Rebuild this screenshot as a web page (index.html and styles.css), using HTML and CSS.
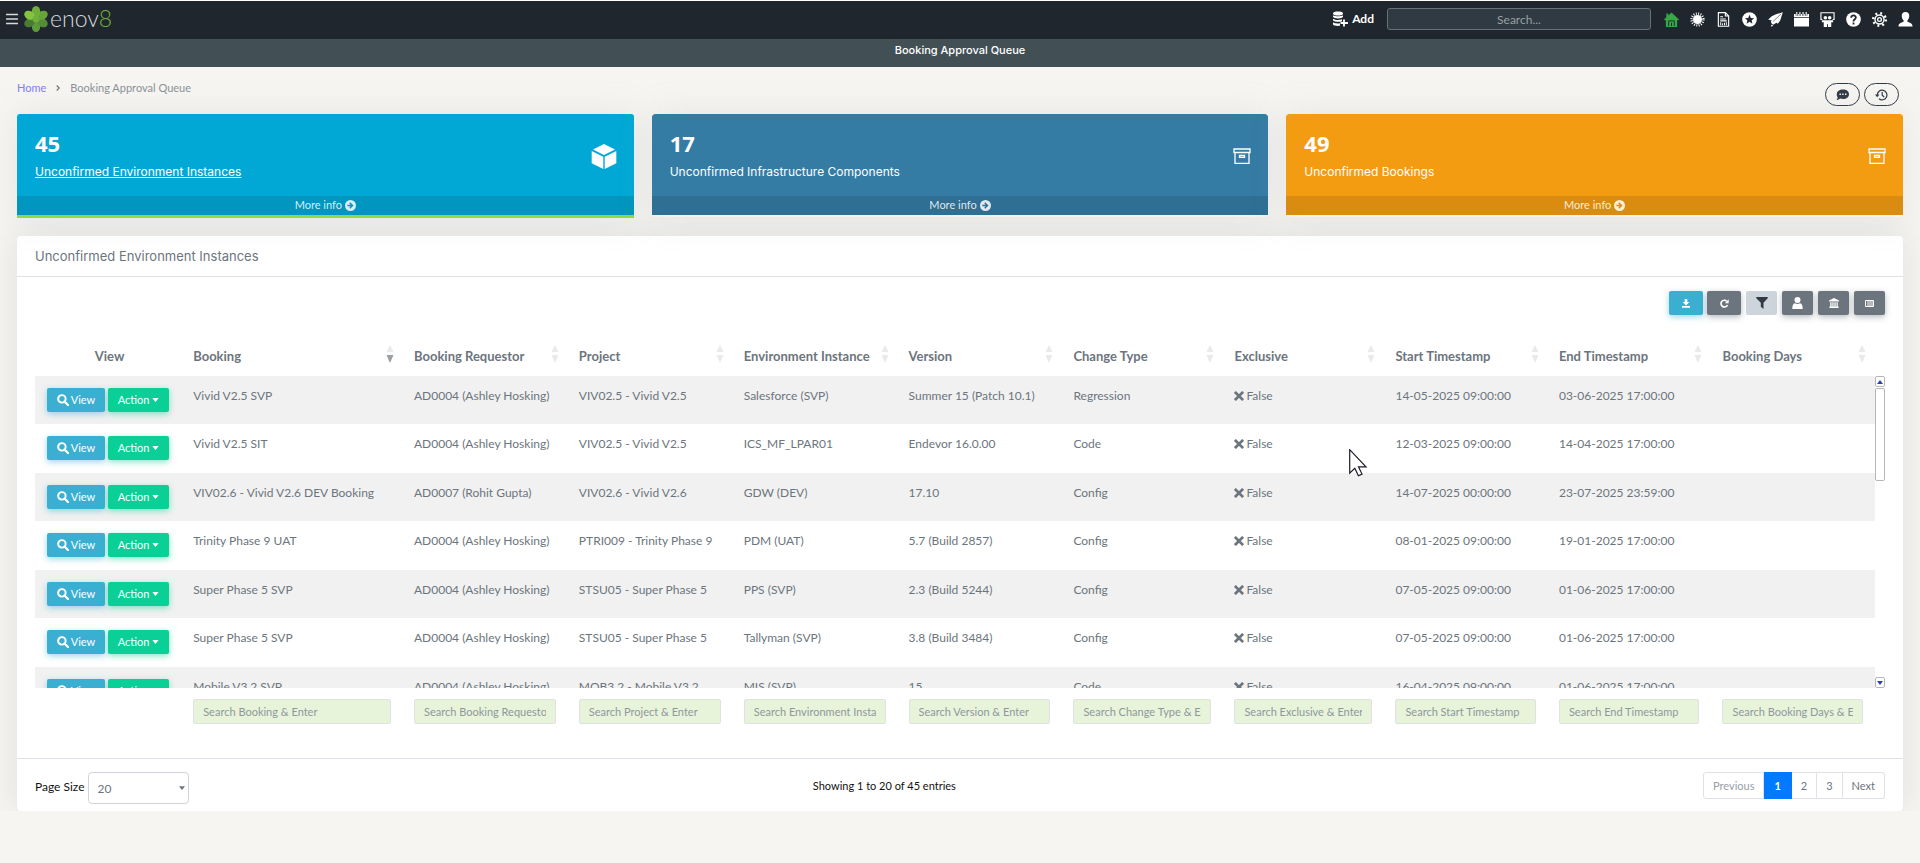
FILE: index.html
```html
<!DOCTYPE html>
<html lang="en">
<head>
  <meta charset="utf-8">
  <title>Booking Approval Queue</title>
  <link rel="stylesheet" href="styles.css">
</head>
<body>
  <svg class="sprite" aria-hidden="true">
    <symbol id="i-search" viewBox="0 0 16 16"><circle cx="6.5" cy="6.5" r="5" fill="none" stroke="currentColor" stroke-width="2.6"/><path d="M10 10l5 5" stroke="currentColor" stroke-width="3" stroke-linecap="round"/></symbol>
    <symbol id="i-times" viewBox="0 0 16 16"><path d="M3 3l10 10M13 3L3 13" stroke="currentColor" stroke-width="4.4" stroke-linecap="square"/></symbol>
    <symbol id="i-caret" viewBox="0 0 8 5"><path d="M0 0h8L4 5z" fill="currentColor"/></symbol>
    <symbol id="i-arrow" viewBox="0 0 16 16"><path fill="currentColor" fill-rule="evenodd" d="M8 0a8 8 0 100 16A8 8 0 008 0zM7.600 3.300L12.400 8l-4.800 4.700-1.400-1.400L8.300 9H3.500V7h4.800L6.200 4.700z"/></symbol>
    <symbol id="i-box" viewBox="0 0 18 16"><path fill="none" stroke="currentColor" stroke-width="1.300" d="M1 1h16v3.500H1zM2 4.500v10.800h14V4.500M6.500 7.500h5v1.800h-5z"/></symbol>
    <symbol id="i-sort" viewBox="0 0 8 18"><path d="M4 0l3.500 7h-7z"/><path d="M.5 10h7L4 18z"/></symbol>
    <symbol id="i-sort-desc" viewBox="0 0 8 18"><path d="M4 0l3.500 7h-7z"/><path d="M.5 10h7L4 18z" fill="#9aa0a6"/></symbol>
  </svg>

  <header class="topbar">
    <button class="menu-btn" aria-label="Menu"><svg width="12" height="12" viewBox="0 0 12 12"><path d="M0 1.500h12M0 6h12M0 10.500h12" stroke="#d5d9db" stroke-width="1.500"/></svg></button>
    <a class="logo" href="#" aria-label="enov8">
      <svg width="24" height="28" viewBox="-12 -14 24 28">
        <ellipse cx="0" cy="7.500" rx="4.200" ry="5.500" fill="#5c9a3c"/>
        <ellipse cx="0" cy="7.500" rx="4.200" ry="5.500" fill="#4b7a35" transform="rotate(60)"/>
        <ellipse cx="0" cy="7.500" rx="4.200" ry="5.500" fill="#558c38" transform="rotate(300)"/>
        <ellipse cx="0" cy="7.500" rx="4.200" ry="5.500" fill="#67a33b" transform="rotate(240)"/>
        <ellipse cx="0" cy="7.500" rx="4.200" ry="5.500" fill="#6fae3d" transform="rotate(180)"/>
        <ellipse cx="0" cy="7.500" rx="4.200" ry="5.500" fill="#85c440" transform="rotate(120)"/>
        <circle r="3.500" fill="#6fae3d"/>
      </svg>
      <span class="logo-text">enov<b>8</b></span>
    </a>
    <button class="add-btn">
      <svg width="16" height="16" viewBox="0 0 16 16"><path fill="#fff" d="M1 2.500C1 1 3 .5 6 .5s5 .5 5 2S9 4.500 6 4.500s-5-.5-5-2zM1 4.200c2 1.500 8 1.500 10 0v1.500C10 8 2 8 1 5.700zM1 7.700c2 1.500 7 1.500 9 .6v2C8 11.200 2 11 1 9.200zM1 11.200c1.500 1.200 4 1.400 7 1v2.600c-3 .4-6 0-7-1.300z"/><path stroke="#fff" stroke-width="1.800" d="M12 8.500v7M8.500 12H16"/></svg>
      Add
    </button>
    <input class="top-search" type="text" placeholder="Search..." aria-label="Search">
    <nav class="top-icons">
      <a href="#" aria-label="Home" class="home"><svg viewBox="0 0 16 16"><path fill="currentColor" d="M8 .5l8 7.500-1 1-1-.8V16H2V8.200L1 9 0 8l2.500-2.300V1.500h2v2.300z"/><path d="M5 15V9.500h6V15M8 15v-3.500" fill="none" stroke="#1f262d" stroke-width="1"/></svg></a>
      <a href="#" aria-label="Alerts"><svg viewBox="0 0 16 16"><circle cx="8" cy="8" r="4.800" fill="currentColor"/><circle cx="8" cy="8" r="6.300" fill="none" stroke="currentColor" stroke-width="2.600" stroke-dasharray="1 1.470"/></svg></a>
      <a href="#" aria-label="Reports"><svg viewBox="0 0 16 16"><path fill="none" stroke="currentColor" stroke-width="1.200" d="M2.500.7h7.500l3.500 3.500v11h-11zM10 .7v3.500h3.500M4.500 5h3M4.500 7.500h6M4.500 9.500h7"/><path fill="currentColor" d="M4.500 11h1v3h-1zM6.500 12h1v2h-1zM8.500 11.500h1V14h-1zM10.500 11h1v3h-1z"/></svg></a>
      <a href="#" aria-label="Favourites"><svg viewBox="0 0 16 16"><path fill="currentColor" fill-rule="evenodd" d="M8 .2a7.800 7.800 0 100 15.600A7.800 7.800 0 008 .2zM8 3l1.400 3.300 3.600.3-2.700 2.300.8 3.500L8 10.500l-3.100 1.900.8-3.500L3 6.600l3.600-.3z"/></svg></a>
      <a href="#" aria-label="Releases"><svg viewBox="0 0 16 16"><path fill="currentColor" d="M15.800.2L13 9l-2.500 3.500L9 11.500 5.500 13.500 4 12.500l-1-2 1-1.500L.2 8 4 4.500 8.500 2.500zM3 13.500L5.500 14l-1.500 2z"/><path d="M5.500 10L14 2" stroke="#1f262d" stroke-width=".6"/></svg></a>
      <a href="#" aria-label="Calendar"><svg viewBox="0 0 16 16"><path fill="currentColor" d="M0 2h16v3.500H0zM0 6.500h16V15.500H0z"/><path stroke="#1f262d" stroke-width="2.400" d="M3 1v3M6.300 1v3M9.700 1v3M13 1v3"/><path stroke="currentColor" stroke-width="1.200" d="M3 0v4M6.300 0v4M9.700 0v4M13 0v4"/></svg></a>
      <a href="#" aria-label="Teams"><svg viewBox="0 0 16 16"><path fill="none" stroke="currentColor" stroke-width="1.200" d="M2.500 8H1V.8h14V8h-1.500"/><g fill="currentColor"><circle cx="5.700" cy="6.200" r="1.900"/><circle cx="10.300" cy="6.200" r="1.900"/><path d="M2 8.700h12v2.300h-2V16H8.500v-3h-1v3H4v-5H2z"/></g></svg></a>
      <a href="#" aria-label="Help"><svg viewBox="0 0 16 16"><circle cx="8" cy="8" r="7.800" fill="currentColor"/><path fill="none" stroke="#1f262d" stroke-width="1.900" d="M5.500 6c0-3.200 5.200-3 5 .2C10.400 7.800 8 7.800 8 10M8 11.200v2"/></svg></a>
      <a href="#" aria-label="Settings"><svg viewBox="0 0 16 16"><circle cx="8" cy="8" r="6.700" fill="none" stroke="currentColor" stroke-width="2.600" stroke-dasharray="2 3.260"/><circle cx="8" cy="8" r="4.800" fill="none" stroke="currentColor" stroke-width="1.500"/><circle cx="8" cy="8" r="2" fill="none" stroke="currentColor" stroke-width="1.400"/></svg></a>
      <a href="#" aria-label="Profile"><svg viewBox="0 0 16 16"><path fill="currentColor" d="M8 0c2.800 0 4.200 2 4 4.500-.2 2-1 3.500-2 4.500v1.500c2.500 1 5.500 1.500 5.500 5H.5c0-3.500 3-4 5.500-5V9c-1-1-1.800-2.500-2-4.500C3.800 2 5.200 0 8 0z"/></svg></a>
    </nav>
  </header>
  <h1 class="page-title">Booking Approval Queue</h1>

  <main class="page">
    <div class="page-head">
      <nav class="breadcrumb">
        <a href="#">Home</a>
        <svg width="4" height="6" viewBox="0 0 4 6"><path d="M.7.500L3.200 3 .7 5.500" fill="none" stroke="#6c757d" stroke-width="1.200"/></svg>
        <span>Booking Approval Queue</span>
      </nav>
      <div class="head-actions">
        <button class="pill" aria-label="Comments"><svg width="13" height="12" viewBox="0 0 13 12"><path fill="#323a46" d="M7 .5c3.500 0 6 2 6 4.700S10.500 10 7 10c-1 0-2-.2-2.800-.5C3 10.500 1.500 11.200.5 11c.8-.8 1.200-1.700 1.200-2.600C1 7.500.8 6.500.8 5.200.8 2.500 3.500.5 7 .5z"/><path stroke="#fff" stroke-width="1.400" d="M3.500 5.200h1.400M6.200 5.200h1.400M9 5.200h1.400"/></svg></button>
        <button class="pill" aria-label="History"><svg width="13" height="12" viewBox="0 0 13 12"><path fill="none" stroke="#323a46" stroke-width="1.200" d="M2.300 6A4.800 4.800 0 114 9.700M7.200 3v3.200l2 1.800"/><path fill="#323a46" d="M0 5.500h4.500L2.200 8.200z"/></svg></button>
      </div>
    </div>

    <section class="tiles">
      <article class="tile tile-cyan">
        <div class="tile-body">
          <div><strong>45</strong><p>Unconfirmed Environment Instances</p></div>
          <svg width="26" height="25" viewBox="0 0 26 25"><path fill="#fff" d="M13 0l11 5.500-11 5.500L2 5.500zM.7 7l11.600 5.800V25L.7 19.200zM25.300 7v12.200L13.700 25V12.800z"/></svg>
        </div>
        <a class="tile-more" href="#">More info <svg width="11" height="11"><use href="#i-arrow"/></svg></a>
      </article>
      <article class="tile tile-blue">
        <div class="tile-body">
          <div><strong>17</strong><p>Unconfirmed Infrastructure Components</p></div>
          <svg width="18" height="16"><use href="#i-box"/></svg>
        </div>
        <a class="tile-more" href="#">More info <svg width="11" height="11"><use href="#i-arrow"/></svg></a>
      </article>
      <article class="tile tile-orange">
        <div class="tile-body">
          <div><strong>49</strong><p>Unconfirmed Bookings</p></div>
          <svg width="18" height="16"><use href="#i-box"/></svg>
        </div>
        <a class="tile-more" href="#">More info <svg width="11" height="11"><use href="#i-arrow"/></svg></a>
      </article>
    </section>

    <section class="panel">
      <h2 class="panel-title">Unconfirmed Environment Instances</h2>
      <div class="panel-body">
        <div class="toolbar">
          <div class="tool-pair">
            <button class="tool tool-info" aria-label="Download"><svg width="8" height="9" viewBox="0 0 8 9"><path fill="currentColor" d="M2.700 0h2.600v3h2L4 6.400.7 3h2zM0 7h8v1.700H0z"/></svg></button>
            <button class="tool" aria-label="Refresh"><svg width="9" height="9" viewBox="0 0 9 9"><path fill="none" stroke="currentColor" stroke-width="1.600" d="M7.500 6A3.400 3.400 0 116.800 2.200"/><path fill="currentColor" d="M8.700.2v4H4.900z"/></svg></button>
          </div>
          <button class="tool tool-light" aria-label="Filter"><svg width="12" height="12" viewBox="0 0 12 12"><path fill="currentColor" d="M.3 0h11.400v1.200L7.500 5.800V12L4.800 9.800v-4L.3 1.200z"/></svg></button>
          <button class="tool" aria-label="User"><svg width="11" height="12" viewBox="0 0 11 12"><circle cx="5.500" cy="3" r="3" fill="currentColor"/><path fill="currentColor" d="M.3 12c0-3.500.7-5.300 2.700-5.700 1.500 1 3.500 1 5 0 2 .4 2.700 2.200 2.700 5.700z"/></svg></button>
          <button class="tool" aria-label="Organisation"><svg width="10" height="10" viewBox="0 0 10 10"><path fill="currentColor" d="M5 0l5 2.500v1H0v-1zM1.200 4.200h1.400V8H1.200zM3.300 4.200h1.300V8H3.300zM5.400 4.200h1.300V8H5.400zM7.500 4.200h1.300V8H7.500zM.5 8.200h9V10h-9z"/></svg></button>
          <button class="tool" aria-label="Columns"><svg width="9" height="7" viewBox="0 0 9 7"><path fill="none" stroke="currentColor" d="M.5.500h8v6h-8zM3 0v7M5 0v7M7 0v7"/></svg></button>
        </div>

        <div class="grid-head">
          <table>
            <colgroup><col class="c-view"><col class="c-booking"><col class="c-text" span="4"><col class="c-flag" span="2"><col span="3"></colgroup>
            <thead>
              <tr>
                <th class="center">View</th>
                <th><div>Booking<svg><use href="#i-sort-desc"/></svg></div></th>
                <th><div>Booking Requestor<svg><use href="#i-sort"/></svg></div></th>
                <th><div>Project<svg><use href="#i-sort"/></svg></div></th>
                <th><div>Environment Instance<svg><use href="#i-sort"/></svg></div></th>
                <th><div>Version<svg><use href="#i-sort"/></svg></div></th>
                <th><div>Change Type<svg><use href="#i-sort"/></svg></div></th>
                <th><div>Exclusive<svg><use href="#i-sort"/></svg></div></th>
                <th><div>Start Timestamp<svg><use href="#i-sort"/></svg></div></th>
                <th><div>End Timestamp<svg><use href="#i-sort"/></svg></div></th>
                <th><div>Booking Days<svg><use href="#i-sort"/></svg></div></th>
              </tr>
            </thead>
          </table>
        </div>

        <div class="grid-body">
          <table>
            <colgroup><col class="c-view"><col class="c-booking"><col class="c-text" span="4"><col class="c-flag" span="2"><col span="3"></colgroup>
            <tbody>
              <tr>
                <td class="actions"><button class="btn btn-view"><svg><use href="#i-search"/></svg>View</button><button class="btn btn-action">Action<svg><use href="#i-caret"/></svg></button></td>
                <td>Vivid V2.5 SVP</td><td>AD0004 (Ashley Hosking)</td><td>VIV02.5 - Vivid V2.5</td><td>Salesforce (SVP)</td><td>Summer 15 (Patch 10.1)</td><td>Regression</td><td><svg><use href="#i-times"/></svg>False</td><td>14-05-2025 09:00:00</td><td>03-06-2025 17:00:00</td><td></td>
              </tr>
              <tr>
                <td class="actions"><button class="btn btn-view"><svg><use href="#i-search"/></svg>View</button><button class="btn btn-action">Action<svg><use href="#i-caret"/></svg></button></td>
                <td>Vivid V2.5 SIT</td><td>AD0004 (Ashley Hosking)</td><td>VIV02.5 - Vivid V2.5</td><td>ICS_MF_LPAR01</td><td>Endevor 16.0.00</td><td>Code</td><td><svg><use href="#i-times"/></svg>False</td><td>12-03-2025 09:00:00</td><td>14-04-2025 17:00:00</td><td></td>
              </tr>
              <tr>
                <td class="actions"><button class="btn btn-view"><svg><use href="#i-search"/></svg>View</button><button class="btn btn-action">Action<svg><use href="#i-caret"/></svg></button></td>
                <td>VIV02.6 - Vivid V2.6 DEV Booking</td><td>AD0007 (Rohit Gupta)</td><td>VIV02.6 - Vivid V2.6</td><td>GDW (DEV)</td><td>17.10</td><td>Config</td><td><svg><use href="#i-times"/></svg>False</td><td>14-07-2025 00:00:00</td><td>23-07-2025 23:59:00</td><td></td>
              </tr>
              <tr>
                <td class="actions"><button class="btn btn-view"><svg><use href="#i-search"/></svg>View</button><button class="btn btn-action">Action<svg><use href="#i-caret"/></svg></button></td>
                <td>Trinity Phase 9 UAT</td><td>AD0004 (Ashley Hosking)</td><td>PTRI009 - Trinity Phase 9</td><td>PDM (UAT)</td><td>5.7 (Build 2857)</td><td>Config</td><td><svg><use href="#i-times"/></svg>False</td><td>08-01-2025 09:00:00</td><td>19-01-2025 17:00:00</td><td></td>
              </tr>
              <tr>
                <td class="actions"><button class="btn btn-view"><svg><use href="#i-search"/></svg>View</button><button class="btn btn-action">Action<svg><use href="#i-caret"/></svg></button></td>
                <td>Super Phase 5 SVP</td><td>AD0004 (Ashley Hosking)</td><td>STSU05 - Super Phase 5</td><td>PPS (SVP)</td><td>2.3 (Build 5244)</td><td>Config</td><td><svg><use href="#i-times"/></svg>False</td><td>07-05-2025 09:00:00</td><td>01-06-2025 17:00:00</td><td></td>
              </tr>
              <tr>
                <td class="actions"><button class="btn btn-view"><svg><use href="#i-search"/></svg>View</button><button class="btn btn-action">Action<svg><use href="#i-caret"/></svg></button></td>
                <td>Super Phase 5 SVP</td><td>AD0004 (Ashley Hosking)</td><td>STSU05 - Super Phase 5</td><td>Tallyman (SVP)</td><td>3.8 (Build 3484)</td><td>Config</td><td><svg><use href="#i-times"/></svg>False</td><td>07-05-2025 09:00:00</td><td>01-06-2025 17:00:00</td><td></td>
              </tr>
              <tr>
                <td class="actions"><button class="btn btn-view"><svg><use href="#i-search"/></svg>View</button><button class="btn btn-action">Action<svg><use href="#i-caret"/></svg></button></td>
                <td>Mobile V3.2 SVP</td><td>AD0004 (Ashley Hosking)</td><td>MOB3.2 - Mobile V3.2</td><td>MIS (SVP)</td><td>15</td><td>Code</td><td><svg><use href="#i-times"/></svg>False</td><td>16-04-2025 09:00:00</td><td>01-06-2025 17:00:00</td><td></td>
              </tr>
            </tbody>
          </table>
          <div class="scrollbar">
            <span class="scroll-btn"><svg width="6" height="4" viewBox="0 0 6 4"><path d="M0 4l3-4 3 4z" fill="#2b3fa8"/></svg></span>
            <span class="scroll-thumb"></span>
            <span class="scroll-btn scroll-end"><svg width="6" height="4" viewBox="0 0 6 4"><path d="M0 0h6L3 4z" fill="#2b3fa8"/></svg></span>
          </div>
        </div>

        <div class="grid-foot">
          <table>
            <colgroup><col class="c-view"><col class="c-booking"><col class="c-text" span="4"><col class="c-flag" span="2"><col span="3"></colgroup>
            <tfoot>
              <tr>
                <td></td>
                <td><input type="text" placeholder="Search Booking &amp; Enter" aria-label="Search Booking"></td>
                <td><input type="text" placeholder="Search Booking Requestor &amp; Enter" aria-label="Search Booking Requestor"></td>
                <td><input type="text" placeholder="Search Project &amp; Enter" aria-label="Search Project"></td>
                <td><input type="text" placeholder="Search Environment Instance &amp; Enter" aria-label="Search Environment Instance"></td>
                <td><input type="text" placeholder="Search Version &amp; Enter" aria-label="Search Version"></td>
                <td><input type="text" placeholder="Search Change Type &amp; Enter" aria-label="Search Change Type"></td>
                <td><input type="text" placeholder="Search Exclusive &amp; Enter" aria-label="Search Exclusive"></td>
                <td><input type="text" placeholder="Search Start Timestamp" aria-label="Search Start Timestamp"></td>
                <td><input type="text" placeholder="Search End Timestamp" aria-label="Search End Timestamp"></td>
                <td><input type="text" placeholder="Search Booking Days &amp; Enter" aria-label="Search Booking Days"></td>
              </tr>
            </tfoot>
          </table>
        </div>
      </div>

      <footer class="panel-foot">
        <div class="page-size">
          <label for="page-size">Page Size</label>
          <select id="page-size"><option>20</option><option>50</option><option>100</option></select>
          <svg width="6" height="4"><use href="#i-caret"/></svg>
        </div>
        <p>Showing 1 to 20 of 45 entries</p>
        <div class="pager">
          <button class="muted">Previous</button><button class="active">1</button><button>2</button><button>3</button><button>Next</button>
        </div>
      </footer>
    </section>
  </main>

  <svg class="pointer" width="19" height="28" viewBox="0 0 19 28"><path d="M.7.700v23.500l5.100-4.900 3.600 7.500 3.600-1.700-3.500-7.300h7.500z" fill="#fff" stroke="#1b1b2b" stroke-width="1.200"/></svg>
</body>
</html>
```
FILE: styles.css
```css
* {
  box-sizing: border-box;
}
body {
  margin: 0;
  background: #f6f5f1;
  color: #6c757d;
  font-family: Lato, "Open Sans", sans-serif;
  font-size: 12px;
  line-height: 20px;
}
p, h1, h2 {
  margin: 0;
}
a {
  text-decoration: none;
}
button {
  font: inherit;
  border: 0;
  padding: 0;
  cursor: pointer;
}
input, select {
  font: inherit;
}
.sprite {
  display: none;
}

/* top bar */
.topbar {
  display: flex;
  align-items: center;
  height: 39px;
  padding: 0 7px 2px 6px;
  background: #1f262d;
  border-top: 1px solid #fff;
}
.menu-btn {
  display: flex;
  background: none;
}
.logo {
  display: flex;
  align-items: center;
  gap: 2px;
  margin: 0 auto 0 6px;
}
.logo-text {
  padding-bottom: 3px;
  color: #d5d9db;
  font-size: 23px;
  font-weight: 300;
}
.logo-text b {
  color: #6fae3d;
  font-weight: 300;
}
.add-btn {
  display: flex;
  align-items: center;
  gap: 4px;
  margin-right: 13px;
  background: none;
  color: #fff;
  font-weight: 700;
}
.top-search {
  width: 264px;
  height: 22px;
  margin-right: 13px;
  background: #2f3a42;
  border: 1px solid #65717a;
  border-radius: 3px;
  text-align: center;
}
.top-search::placeholder {
  color: #98a0a6;
}
.top-icons {
  display: flex;
  gap: 11px;
}
.top-icons a {
  color: #fff;
}
.top-icons .home {
  color: #36a845;
}
.top-icons svg {
  display: block;
  width: 15px;
  height: 15px;
}
.page-title {
  height: 28px;
  background: #424f55;
  color: #fff;
  font-family: Inter, sans-serif;
  font-size: 11px;
  font-weight: 500;
  line-height: 22px;
  text-align: center;
}

/* page */
.page {
  padding: 0 17px;
}
.page-head {
  display: flex;
  justify-content: space-between;
  height: 47px;
  padding: 11px 4px 8px 0;
}
.breadcrumb {
  display: flex;
  align-items: center;
  gap: 10px;
  height: 20px;
  font-size: 11px;
  color: #8b9299;
}
.breadcrumb a {
  color: #8080f5;
}
.head-actions {
  display: flex;
  gap: 4px;
  align-items: flex-end;
}
.pill {
  display: flex;
  align-items: center;
  justify-content: center;
  width: 35px;
  height: 23px;
  background: none;
  border: 1px solid #323a46;
  border-radius: 12px;
}

.tiles {
  display: grid;
  grid-template-columns: repeat(3, 1fr);
  gap: 18px;
  margin-bottom: 18px;
}
.tile {
  color: #fff;
  border-radius: 3px;
  border-bottom: 3px solid transparent;
  background-clip: padding-box;
  box-shadow: 0 0 35px rgba(154, 161, 171, 0.18);
}
.tile-cyan {
  background-color: #02a8d5;
  border-bottom-color: #94d643;
  border-radius: 3px 3px 0 0;
}
.tile-blue {
  background-color: #357ca5;
}
.tile-orange {
  background-color: #f39c12;
}
.tile-body {
  display: flex;
  align-items: center;
  justify-content: space-between;
  height: 82px;
  padding: 2px 17px 0 18px;
}
.tile-body strong {
  display: block;
  font-family: "Noto Sans", sans-serif;
  font-size: 22px;
  line-height: 32px;
}
.tile-body p {
  font-family: Inter, sans-serif;
  font-size: 12px;
  line-height: 26px;
}
.tile-cyan p {
  text-decoration: underline;
}
.tile-more {
  display: flex;
  align-items: center;
  justify-content: center;
  gap: 3px;
  height: 19px;
  padding-bottom: 1px;
  background: rgba(0, 0, 0, 0.1);
  color: rgba(255, 255, 255, 0.85);
  font-size: 11px;
}

/* panel */
.panel {
  background: #fff;
  border-radius: 4px;
  box-shadow: 0 0 35px rgba(154, 161, 171, 0.25);
}
.panel-title {
  padding: 10px 18px;
  border-bottom: 1px solid #dee2e6;
  font-family: Inter, sans-serif;
  font-size: 13px;
  font-weight: 400;
}
.panel-body {
  padding: 14px 18px 34px;
}
.toolbar {
  display: flex;
  justify-content: flex-end;
  gap: 5px;
  margin-bottom: 20px;
}
.tool-pair {
  display: flex;
  gap: 4px;
}
.tool {
  display: flex;
  align-items: center;
  justify-content: center;
  width: 31px;
  height: 24px;
  background: #6c757d;
  color: #fff;
  border-radius: 2px;
  box-shadow: 0 2px 6px rgba(108, 117, 125, 0.5);
}
.tool-pair .tool {
  width: 34px;
}
.tool-info {
  background: #3bafd1;
  box-shadow: 0 2px 6px rgba(59, 175, 209, 0.5);
}
.tool-light {
  background: #ced4dc;
  color: #323a46;
  box-shadow: none;
}

/* data grid: head, scrolling body and foot share the same columns */
table {
  width: 100%;
  table-layout: fixed;
  border-collapse: collapse;
}
.c-view {
  width: 8%;
}
.c-booking {
  width: 12%;
}
.c-text {
  width: 8.96%;
}
.c-flag {
  width: 8.75%;
}
th, td {
  padding: 0 12px 0 11px;
  text-align: left;
  white-space: nowrap;
}
.grid-head, .grid-foot {
  padding-right: 10px;
}
th {
  height: 41px;
  padding-right: 9px;
  font-size: 13px;
  font-weight: 700;
}
th.center {
  text-align: center;
}
th div {
  display: flex;
  align-items: center;
  justify-content: space-between;
}
th svg {
  width: 8px;
  height: 18px;
  margin-bottom: 4px;
  fill: #e9eaec;
}
.grid-body {
  display: flex;
  align-items: flex-start;
  height: 312px;
  overflow: hidden;
}
.grid-body table {
  flex: 1;
}
.grid-body td {
  height: 49px;
  padding-top: 10px;
  vertical-align: top;
}
.grid-body tr:nth-child(odd) td {
  height: 48px;
  background: #f1f1f1;
}
td svg {
  width: 10px;
  height: 10px;
  margin-right: 2px;
  vertical-align: -1px;
}
.grid-body .actions {
  padding: 12px 0 0 12px;
}
.btn {
  height: 24px;
  color: #fff;
  border-radius: 2px;
  font-size: 11px;
  line-height: 22px;
  vertical-align: top;
}
.btn-view {
  width: 58px;
  margin-right: 3px;
  background: #3bafd1;
  box-shadow: 0 2px 6px rgba(59, 175, 209, 0.5);
}
.btn-view svg {
  width: 12px;
  height: 12px;
  vertical-align: -2px;
}
.btn-action {
  width: 61px;
  background: #0acf97;
  box-shadow: 0 2px 6px rgba(10, 207, 151, 0.5);
}
.btn-action svg {
  width: 7px;
  height: 4px;
  margin: 0 0 0 3px;
  vertical-align: 2px;
}
.scrollbar {
  display: flex;
  flex-direction: column;
  flex-shrink: 0;
  gap: 1px;
  width: 10px;
  height: 100%;
}
.scroll-btn, .scroll-thumb {
  height: 11px;
  background: #fff;
  border: 1px solid #b4b6ba;
  border-radius: 2px;
}
.scroll-btn {
  display: flex;
  align-items: center;
  justify-content: center;
}
.scroll-thumb {
  height: 93px;
}
.scroll-end {
  margin-top: auto;
}
.grid-foot {
  padding-top: 11px;
}
.grid-foot input {
  display: block;
  width: 100%;
  height: 25px;
  padding: 0 9px;
  background: #e7f4da;
  border: 1px solid #dee2e6;
  border-radius: 2px;
  font-size: 11px;
}
.grid-foot input::placeholder {
  color: #8f979e;
}

/* panel footer */
.panel-foot {
  display: grid;
  grid-template-columns: 5fr 2fr 5fr;
  padding: 13px 18px 7px;
  border-top: 1px solid #dee2e6;
  color: #111;
  font-size: 11px;
}
.panel-foot p {
  padding-left: 7px;
  line-height: 27px;
}
.page-size {
  display: flex;
  align-items: center;
  gap: 3px;
}
.page-size label {
  padding-bottom: 2px;
  font-size: 12px;
}
.page-size select {
  appearance: none;
  width: 101px;
  height: 32px;
  padding: 2px 9px 0;
  background: #fff;
  border: 1px solid #ced4da;
  border-radius: 4px;
  color: #6c757d;
  font-size: 12px;
}
.page-size svg {
  margin-left: -13px;
  color: #6c757d;
}
.pager {
  display: flex;
  align-items: flex-start;
  justify-content: flex-end;
}
.pager button {
  height: 27px;
  padding: 0 9px;
  background: #fff;
  border: 1px solid #dee2e6;
  border-left-width: 0;
  color: #6c757d;
}
.pager button:first-child {
  border-left-width: 1px;
  border-radius: 3px 0 0 3px;
}
.pager button:last-child {
  border-radius: 0 3px 3px 0;
}
.pager .muted {
  color: #98a0a6;
}
.pager .active {
  padding: 0 10px;
  background: #007bff;
  border-color: #007bff;
  color: #fff;
  font-weight: 700;
}

.pointer {
  position: absolute;
  left: 1349px;
  top: 449px;
}
```
